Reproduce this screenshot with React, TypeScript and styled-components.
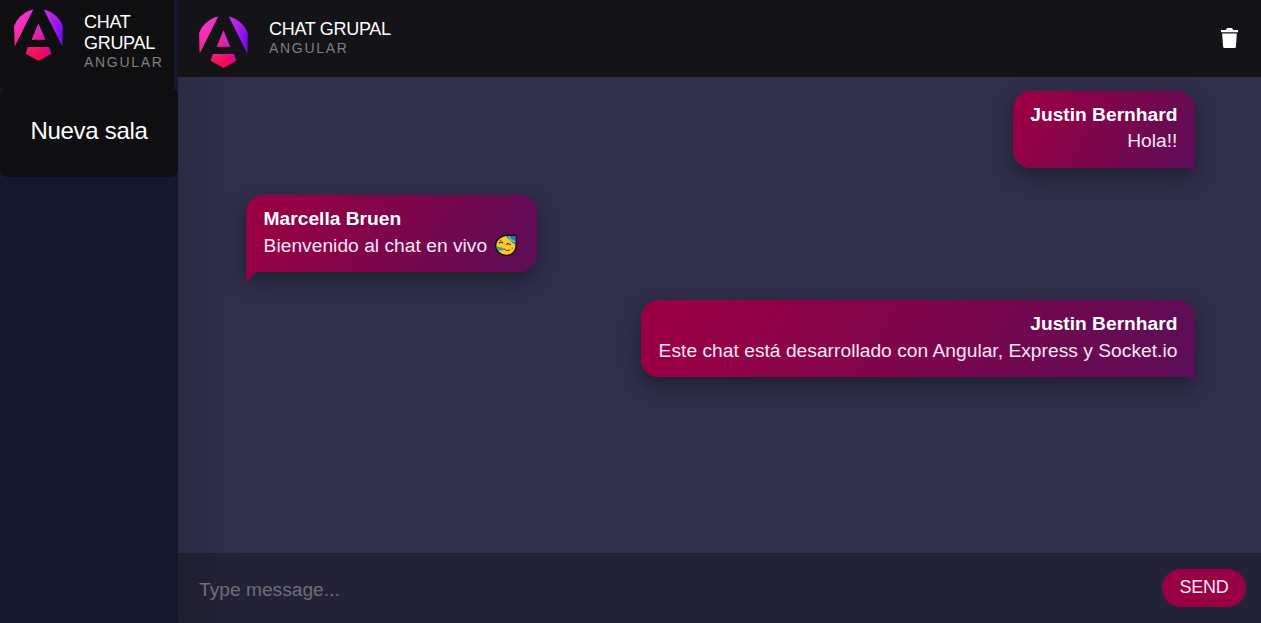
import React from "react";
import styled, { createGlobalStyle } from "styled-components";

const GlobalStyle = createGlobalStyle`
  *, *::before, *::after { box-sizing: border-box; }
  html, body, #root { height: 100%; }
  body {
    margin: 0;
    overflow: hidden;
    background: #14172f;
    color: #fff;
    font-family: "Liberation Sans", Arial, sans-serif;
  }
`;

const Layout = styled.div`
  display: flex;
  height: 100%;
`;

const Sidebar = styled.aside`
  width: 178px;
  flex: none;
  background: #14182f;
`;

const SidebarHeader = styled.header`
  display: flex;
  gap: 21px;
  width: 174px;
  height: 88px;
  padding: 9px 0 0 14px;
  background: #0f0f11;
`;

const NewRoom = styled.button`
  display: block;
  width: 178px;
  height: 89px;
  padding: 0 0 3px;
  border: 0;
  border-radius: 8px;
  background: #0f0f11;
  color: #fff;
  font: 24px "Liberation Sans", Arial, sans-serif;
  letter-spacing: -0.3px;
`;

const Main = styled.main`
  display: flex;
  flex: 1;
  flex-direction: column;
  background: linear-gradient(90deg, #2a2a42 0, #2e2d48 24px, #322f4d 60px);
`;

const TopBar = styled.header`
  display: flex;
  align-items: flex-start;
  gap: 21px;
  height: 77px;
  padding: 16px 22px 0 21px;
  background: #141317;
`;

const LogoSvg = styled.svg`
  flex: none;
  width: 49px;
  height: 52px;
`;

const Titles = styled.div`
  flex: 1;
  padding-top: 3px;
`;

const Title = styled.h1`
  margin: 0;
  font-size: 18px;
  font-weight: 400;
  line-height: 21px;
  letter-spacing: -0.3px;
`;

const Subtitle = styled.p`
  margin: 0;
  color: #7f7f80;
  font-size: 14px;
  line-height: 16px;
  letter-spacing: 1.7px;
`;

const TrashSvg = styled.svg`
  width: 17px;
  height: 20px;
  margin: 12px 1px 0 0;
`;

const Messages = styled.section`
  display: flex;
  flex: 1;
  flex-direction: column;
  align-items: flex-start;
  gap: 27.6px;
  padding: 13.6px 66px 0 68px;
`;

const Bubble = styled.article<{ $own?: boolean }>`
  position: relative;
  align-self: ${(p) => (p.$own ? "flex-end" : "flex-start")};
  height: 77px;
  padding: 11px 17.6px 0;
  border-radius: ${(p) => (p.$own ? "18px 18px 0 18px" : "18px 18px 18px 0")};
  background: linear-gradient(120deg, #990044 10%, #5b0d57 100%);
  box-shadow: 0 8px 20px rgba(22, 26, 36, 0.8);
  font-size: 19.2px;
  line-height: 26.8px;
  text-align: ${(p) => (p.$own ? "right" : "left")};
  white-space: nowrap;

  &::after {
    content: "";
    position: absolute;
    top: 100%;
    ${(p) => (p.$own ? "right: 0;" : "left: 0;")}
    width: ${(p) => (p.$own ? 6 : 11)}px;
    height: ${(p) => (p.$own ? 5 : 10)}px;
    background: ${(p) => (p.$own ? "#5b0d57" : "#8d0547")};
    clip-path: ${(p) => (p.$own ? "polygon(0 0, 100% 0, 100% 100%)" : "polygon(0 0, 100% 0, 0 100%)")};
  }
`;

const Author = styled.div`
  font-weight: 700;
`;

const Text = styled.div`
  color: #fbe6f5;
  letter-spacing: 0.025px;
`;

const EmojiSvg = styled.svg`
  width: 24px;
  height: 24px;
  margin: 0 1px 0 1.5px;
  vertical-align: -5px;
`;

const Composer = styled.form`
  display: flex;
  align-items: center;
  justify-content: space-between;
  height: 70px;
  padding: 0 15px 0 21px;
  background: linear-gradient(90deg, #201f30 0, #232236 50px);
`;

const MessageInput = styled.input`
  flex: 1;
  padding: 3px 0 0;
  border: 0;
  outline: 0;
  background: transparent;
  color: #fff;
  font: 19.2px "Liberation Sans", Arial, sans-serif;

  &::placeholder { color: #6e6d75; opacity: 1; }
`;

const SendButton = styled.button`
  width: 84px;
  height: 38px;
  padding: 0 0 2px;
  border: 0;
  border-radius: 19px;
  background: #990044;
  color: #fbe6f5;
  font: 18px "Liberation Sans", Arial, sans-serif;
  letter-spacing: -0.2px;
`;

function Logo({ id }: { id: string }) {
  return (
    <LogoSvg viewBox="0 0 222.1 235.1" preserveAspectRatio="none">
      <defs>
        <linearGradient id={`${id}-a`} x1="49" y1="226" x2="226" y2="115" gradientUnits="userSpaceOnUse">
          <stop stopColor="#e40035" />
          <stop offset="0.24" stopColor="#f60a48" />
          <stop offset="0.35" stopColor="#f20755" />
          <stop offset="0.49" stopColor="#dc087d" />
          <stop offset="0.74" stopColor="#9717e7" />
          <stop offset="1" stopColor="#6c00f5" />
        </linearGradient>
        <linearGradient id={`${id}-b`} x1="22" y1="28" x2="155" y2="180" gradientUnits="userSpaceOnUse">
          <stop stopColor="#f032cc" />
          <stop offset="1" stopColor="#ff5be1" stopOpacity="0" />
        </linearGradient>
        <clipPath id={`${id}-c`}>
          <ellipse cx="111" cy="120" rx="118" ry="120" />
        </clipPath>
      </defs>
      <g clipPath={`url(#${id}-c)`}>
        {["a", "b"].map((layer) => (
          <path
            key={layer}
            fill={`url(#${id}-${layer})`}
            d="m222.077 30-3 140L134 0h88ZM168.972 202.017l-57.933 33.056-57.934-33.056 9.783-30.556h96.301l9.783 30.556ZM111.039 66l31 73H80l31-73ZM3 170 0 30V0h88L3 170Z"
          />
        ))}
      </g>
    </LogoSvg>
  );
}

function PartyFace() {
  return (
    <EmojiSvg viewBox="0 0 24 24">
      <path d="M12 2.2h10v9.2c1 6-3.800 11-9.600 11C6.400 22.400 1.600 18 1.600 12.200 1.600 7 6 3.200 12 2.200Z" fill="#ffc928" stroke="#16100d" strokeWidth="1.5" />
      <path d="M12 3h9.300v8.800C18.500 9.800 15 7 12 3Z" fill="#247fae" />
      <path d="M15 3c0 3 2.500 5 6 5.500" fill="none" stroke="#73c4df" strokeWidth="1.300" />
      <path d="M5 10.500c.8-1.800 3-1.900 4-.3M12.500 11.800c1-1.600 3.300-1.400 4 .4" fill="none" stroke="#4d3018" strokeWidth="1.200" />
      <path d="M10 15.500c1.500 2 4 2.400 6 1" fill="none" stroke="#8a4b16" strokeWidth="1.100" />
      <path d="m9.500 15-7-1.500c0 2.600 1.200 4 3 4.200L10 17Z" fill="#3b9b9b" />
      <circle cx="6.500" cy="7.500" r="1" fill="#e75a37" />
      <circle cx="18.500" cy="15" r="1" fill="#ef7a30" />
    </EmojiSvg>
  );
}

const messages = [
  { author: "Justin Bernhard", text: "Hola!!", own: true },
  { author: "Marcella Bruen", text: "Bienvenido al chat en vivo ", own: false, party: true },
  { author: "Justin Bernhard", text: "Este chat está desarrollado con Angular, Express y Socket.io", own: true },
];

export default function App() {
  return (
    <>
      <GlobalStyle />
      <Layout>
        <Sidebar>
          <SidebarHeader>
            <Logo id="side" />
            <Titles>
              <Title>CHAT GRUPAL</Title>
              <Subtitle>ANGULAR</Subtitle>
            </Titles>
          </SidebarHeader>
          <NewRoom>Nueva sala</NewRoom>
        </Sidebar>
        <Main>
          <TopBar>
            <Logo id="top" />
            <Titles>
              <Title>CHAT GRUPAL</Title>
              <Subtitle>ANGULAR</Subtitle>
            </Titles>
            <TrashSvg viewBox="0 0 18 20" preserveAspectRatio="none" fill="#fff">
              <path d="M0 2h5l1.500-2h5L13 2h5v2.300H0ZM1.200 5.500h15.600L15.800 18.500q-.1 1.500-1.500 1.500H3.700q-1.400 0-1.500-1.500Z" />
            </TrashSvg>
          </TopBar>
          <Messages>
            {messages.map((m) => (
              <Bubble key={m.text} $own={m.own}>
                <Author>{m.author}</Author>
                <Text>
                  {m.text}
                  {m.party && <PartyFace />}
                </Text>
              </Bubble>
            ))}
          </Messages>
          <Composer>
            <MessageInput placeholder="Type message..." />
            <SendButton type="button">SEND</SendButton>
          </Composer>
        </Main>
      </Layout>
    </>
  );
}
